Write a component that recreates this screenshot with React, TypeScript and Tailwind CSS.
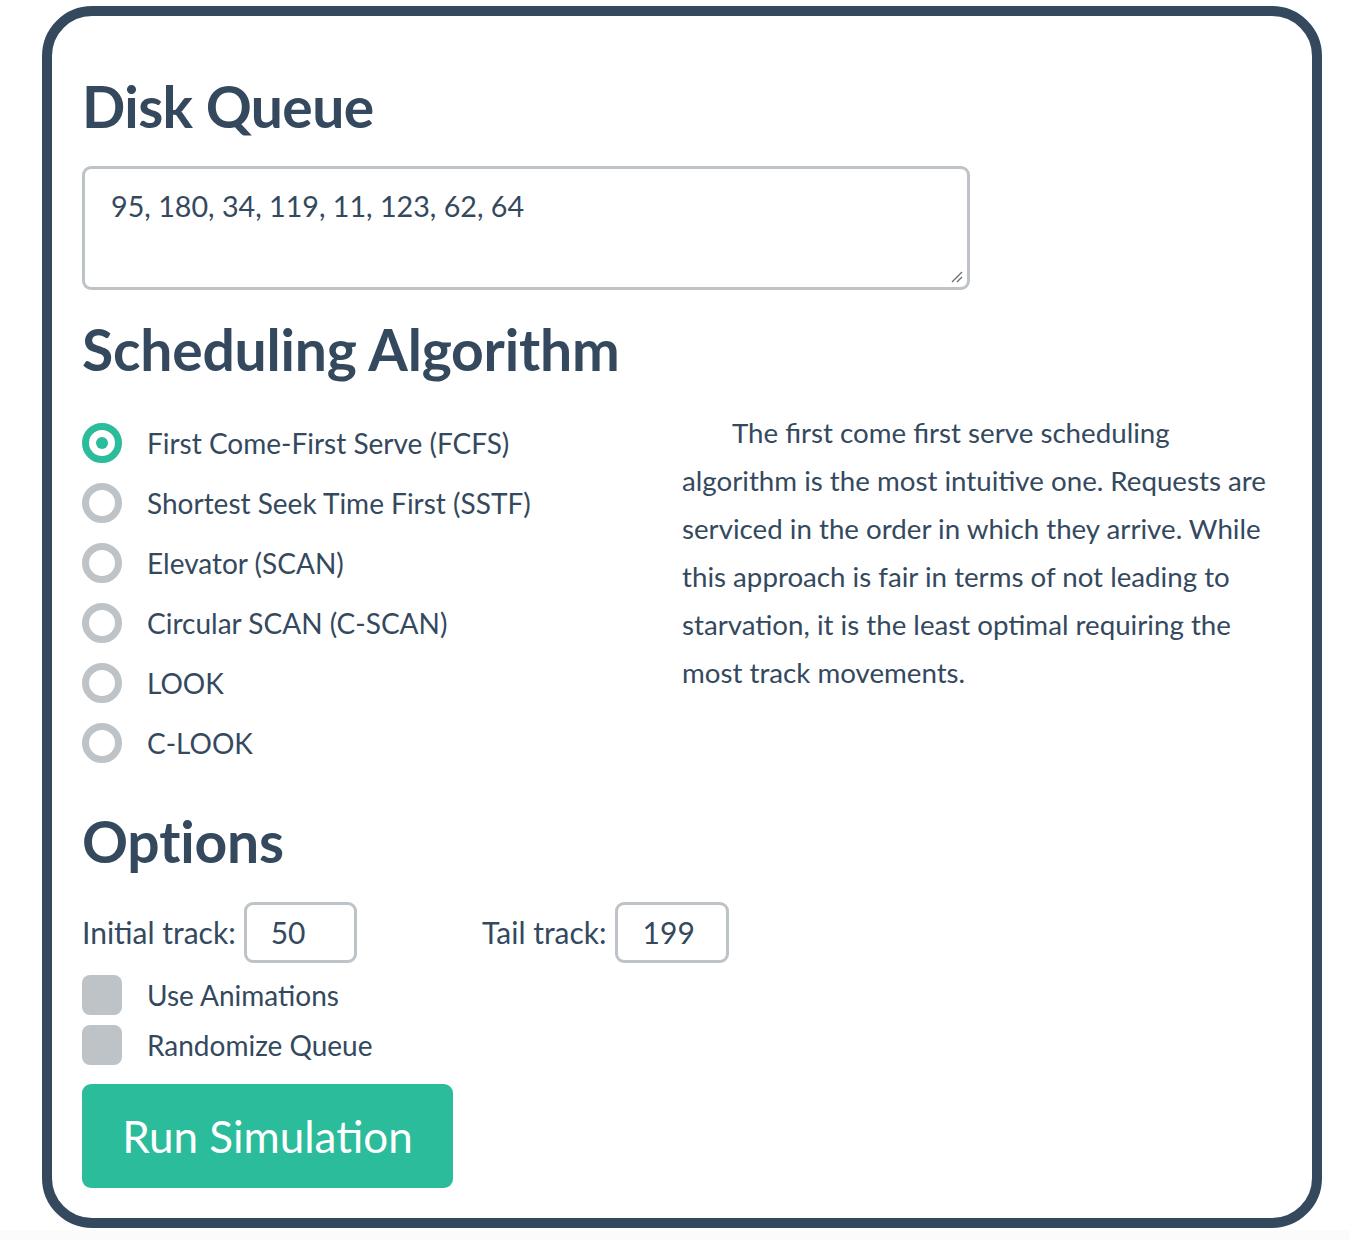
import React from "react";

const font = { fontFamily: "Lato, 'Open Sans', sans-serif" };

function Radio({ checked, label }: { checked?: boolean; label: string }) {
  return (
    <div className="flex items-center h-[60px]">
      <div
        className={
          checked
            ? "w-[40px] h-[40px] rounded-full border-[7px] border-[#2bbc9b] flex items-center justify-center"
            : "w-[40px] h-[40px] rounded-full border-[7px] border-[#bdc3c7]"
        }
      >
        {checked && <div className="w-[12px] h-[12px] rounded-full bg-[#2bbc9b]" />}
      </div>
      <span className="ml-[25px] text-[28px] text-[#34495e]">{label}</span>
    </div>
  );
}

function Check({ label }: { label: string }) {
  return (
    <div className="flex items-center h-[50px]">
      <div className="w-[40px] h-[40px] rounded-[8px] bg-[#bdc3c7]" />
      <span className="ml-[25px] text-[28px] text-[#34495e]">{label}</span>
    </div>
  );
}

export default function App() {
  return (
    <div className="w-[1350px] h-[1240px] flex flex-col" style={font}>
      <div className="h-[1230px] bg-white pt-[6px] pl-[42px]">
        <div className="w-[1280px] h-[1222px] border-[10px] border-[#34495e] rounded-[50px] px-[30px] pt-[50px] text-[#34495e]">
          <h1 className="text-[57px] font-bold leading-[80px] tracking-[-0.6px]">Disk Queue</h1>
          <div className="mt-[20px] w-[888px] h-[124px] border-[3px] border-[#bdc3c7] rounded-[9px] relative pl-[26px] pt-[16px] text-[28.7px]">
            95, 180, 34, 119, 11, 123, 62, 64
            <svg className="absolute right-[4px] bottom-[4px]" width="12" height="12" viewBox="0 0 12 12">
              <line x1="1" y1="11" x2="11" y2="1" stroke="#6b6b6b" strokeWidth="1.3" />
              <line x1="6" y1="11" x2="11" y2="6" stroke="#6b6b6b" strokeWidth="1.3" />
            </svg>
          </div>
          <h2 className="mt-[19px] text-[57px] font-bold leading-[80px] tracking-[-0.2px]">Scheduling Algorithm</h2>
          <div className="mt-[32px] grid grid-cols-2">
            <div className="-mt-[8px]">
              <Radio checked label="First Come-First Serve (FCFS)" />
              <Radio label="Shortest Seek Time First (SSTF)" />
              <Radio label="Elevator (SCAN)" />
              <Radio label="Circular SCAN (C-SCAN)" />
              <Radio label="LOOK" />
              <Radio label="C-LOOK" />
            </div>
            <p className="text-[27.7px] leading-[48px] indent-[50px] -mt-[12px]">
              The first come first serve scheduling algorithm is the most intuitive one. Requests are serviced in the order in which they arrive. While this approach is fair in terms of not leading to starvation, it is the least optimal requiring the most track movements.
            </p>
          </div>
          <h2 className="mt-[28px] text-[57px] font-bold leading-[80px] tracking-[-0.2px]">Options</h2>
          <div className="mt-[21px] grid grid-cols-3">
            <div className="flex items-center gap-[8px]">
              <span className="text-[30px]">Initial track:</span>
              <div className="w-[113px] h-[61px] border-[3px] border-[#bdc3c7] rounded-[9px] flex items-center pl-[24px] text-[30px]">50</div>
            </div>
            <div className="flex items-center gap-[8px]">
              <span className="text-[30px]">Tail track:</span>
              <div className="w-[114px] h-[61px] border-[3px] border-[#bdc3c7] rounded-[9px] flex items-center pl-[25px] text-[30px]">199</div>
            </div>
          </div>
          <div className="mt-[7px]">
            <Check label="Use Animations" />
            <Check label="Randomize Queue" />
          </div>
          <button className="mt-[14px] w-[371px] h-[104px] bg-[#2bbc9b] rounded-[9px] text-white text-[44px] flex items-center justify-center">
            Run Simulation
          </button>
        </div>
      </div>
      <div className="flex-1 bg-[#fbfbfb]" />
    </div>
  );
}
